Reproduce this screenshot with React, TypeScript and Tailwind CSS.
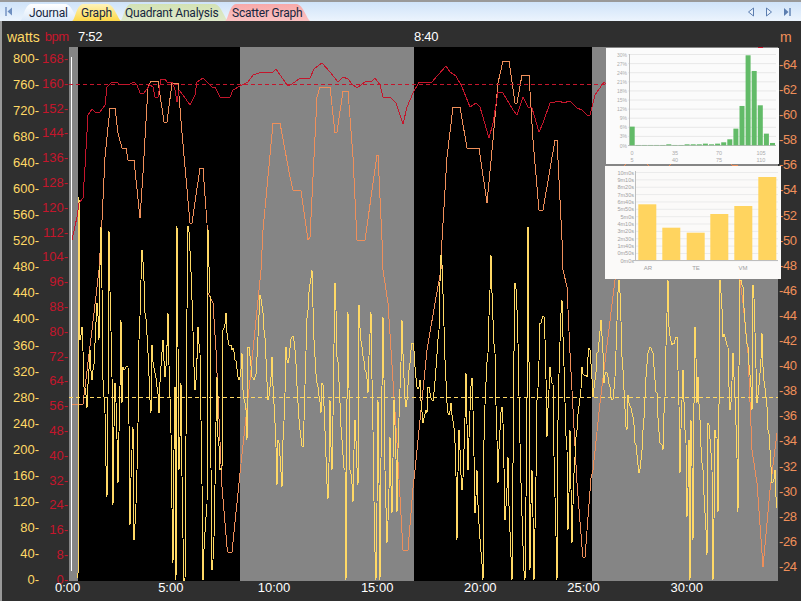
const watts = [800, 760, 720, 680, 640, 600, 560, 520, 480, 440, 400, 360, 320, 280, 240, 200, 160, 120, 80, 40, 0];
const bpm = [168, 160, 152, 144, 136, 128, 120, 112, 104, 96, 88, 80, 72, 64, 56, 48, 40, 32, 24, 16, 8, 0];
const metres = [64, 62, 60, 58, 56, 54, 52, 50, 48, 46, 44, 42, 40, 38, 36, 34, 32, 30, 28, 26, 24];
const times = ["0:00", "5:00", "10:00", "15:00", "20:00", "25:00", "30:00"];

const tabs = [
  { label: "Journal", w: 59, box: "w-[59px] ml-[20px] pl-[9px]", top: "#ffffff", bottom: "#dbe9fa", id: "tabJournal" },
  { label: "Graph", w: 49, box: "w-[49px] -ml-[7px] pl-[9px]", top: "#fff3b8", bottom: "#fdd84a", id: "tabGraph" },
  { label: "Quadrant Analysis", w: 108, box: "w-[108px] -ml-[1px] pl-[5px]", top: "#d3e2b4", bottom: "#dfeacb", id: "tabQuadrant" },
  { label: "Scatter Graph", w: 85, box: "w-[85px] -ml-[3px] pl-[7px]", top: "#f8a9a9", bottom: "#fbc2c2", id: "tabScatter" },
];

const redLine = [
  [72, 240], [77, 217], [79, 203], [83, 198], [85, 167], [88, 115], [92, 109], [95, 112], [100, 112], [105, 105], [107, 87], [112, 82], [117, 82], [119, 84], [130, 84], [134, 82], [137, 85], [140, 93], [144, 93], [150, 85], [153, 87], [155, 97], [158, 97], [161, 79], [165, 79], [167, 82], [172, 82], [175, 90], [177, 102], [179, 90], [183, 95], [190, 105], [195, 95], [197, 82], [203, 78], [207, 82], [212, 87], [215, 87], [220, 97], [230, 97], [233, 90], [242, 85], [248, 82], [253, 75], [262, 72], [273, 72], [276, 69], [287, 85], [290, 85], [295, 82], [300, 78], [310, 78], [314, 69], [322, 63], [330, 72], [338, 82], [343, 77], [348, 79], [352, 84], [357, 88], [365, 82], [372, 81], [375, 78], [380, 85], [383, 97], [390, 97], [396, 103], [403, 124], [407, 107], [413, 93], [419, 82], [432, 82], [438, 75], [446, 66], [450, 72], [456, 76], [462, 87], [470, 107], [476, 103], [480, 107], [489, 138], [493, 123], [498, 92], [503, 93], [513, 110], [517, 115], [523, 97], [528, 107], [532, 108], [539, 132], [543, 123], [550, 103], [560, 101], [563, 103], [570, 101], [577, 108], [582, 110], [587, 115], [590, 115], [595, 95], [604, 82], [607, 85], [640, 70], [700, 62], [762, 47], [778, 60],
];

const orangeLine = [
  [72, 404], [83, 404], [85, 387], [92, 330], [99, 270], [102, 220], [105, 157], [110, 108], [115, 108], [118, 133], [122, 148], [126, 148], [128, 160], [134, 160], [140, 218], [143, 173], [148, 87], [151, 81], [158, 81], [164, 122], [167, 122], [172, 83], [178, 83], [182, 133], [190, 223], [192, 223], [200, 168], [203, 168], [207, 223], [208, 293], [213, 303], [216, 350], [222, 487], [227, 547], [228, 552], [232, 552], [240, 473], [250, 380], [261, 270], [263, 230], [273, 123], [280, 123], [290, 177], [293, 190], [301, 191], [308, 240], [310, 237], [317, 97], [320, 87], [330, 87], [335, 133], [337, 132], [343, 91], [348, 91], [353, 157], [357, 240], [365, 240], [377, 155], [378, 155], [382, 240], [383, 270], [388, 303], [397, 443], [400, 497], [403, 550], [408, 550], [413, 488], [415, 470], [427, 350], [435, 303], [441, 270], [442, 240], [447, 157], [453, 107], [460, 107], [467, 148], [479, 148], [487, 203], [493, 140], [498, 83], [503, 61], [509, 61], [515, 103], [517, 103], [522, 75], [529, 75], [533, 140], [539, 210], [543, 210], [555, 140], [557, 140], [562, 240], [563, 270], [567, 287], [570, 353], [577, 483], [582, 547], [583, 557], [585, 557], [591, 478], [593, 470], [600, 403], [608, 337], [615, 280], [625, 165], [632, 70], [640, 70], [648, 165], [656, 230], [662, 230], [670, 165], [678, 60], [690, 60], [700, 100], [710, 60], [725, 60], [732, 165], [737, 165], [740, 280], [743, 303], [748, 353], [752, 450], [757, 483], [763, 567], [770, 490], [777, 433],
];

const yellowAnchors = [
  [78, 578], [79, 197], [80, 340], [82, 327], [84, 387], [87, 408], [90, 350], [92, 380], [93, 370], [97, 303], [99, 340], [101, 227], [103, 380], [105, 413], [107, 497], [109, 231], [112, 377], [113, 505], [115, 383], [118, 483], [121, 320], [122, 403], [123, 367], [128, 367], [130, 525], [133, 427], [134, 540], [137, 470], [139, 340], [142, 250], [145, 313], [148, 353], [151, 413], [152, 345], [157, 387], [159, 413], [163, 340], [165, 377], [168, 313], [171, 433], [172, 508], [173, 563], [175, 387], [176, 580], [177, 226], [179, 470], [181, 383], [184, 580], [185, 580], [187, 310], [188, 226], [192, 300], [195, 390], [198, 327], [200, 353], [203, 580], [207, 507], [208, 229], [210, 293], [212, 570], [214, 537], [217, 377], [218, 437], [220, 470], [222, 470], [223, 330], [226, 313], [228, 340], [232, 350], [235, 360], [239, 380], [242, 353], [243, 390], [246, 410], [247, 440], [248, 347], [252, 377], [255, 377], [260, 295], [264, 330], [268, 400], [272, 357], [275, 423], [277, 485], [278, 440], [282, 487], [283, 440], [286, 347], [288, 363], [292, 337], [295, 350], [298, 403], [303, 447], [308, 310], [312, 270], [315, 357], [318, 387], [321, 413], [322, 383], [328, 499], [330, 400], [332, 470], [335, 283], [337, 357], [341, 427], [345, 470], [346, 580], [347, 400], [348, 312], [350, 470], [353, 502], [355, 420], [358, 485], [359, 305], [362, 347], [365, 370], [368, 393], [371, 312], [373, 430], [376, 580], [378, 400], [380, 580], [382, 387], [383, 317], [385, 470], [387, 543], [390, 437], [392, 513], [394, 400], [397, 512], [402, 320], [406, 407], [410, 363], [413, 343], [415, 367], [417, 387], [420, 380], [423, 423], [427, 413], [428, 387], [432, 400], [439, 330], [441, 255], [445, 360], [448, 413], [451, 403], [455, 443], [457, 540], [459, 430], [462, 490], [466, 373], [468, 470], [472, 378], [473, 410], [475, 513], [477, 470], [483, 580], [484, 440], [488, 353], [491, 255], [495, 353], [498, 483], [500, 430], [502, 407], [503, 423], [505, 520], [508, 457], [512, 580], [515, 283], [517, 310], [520, 443], [525, 580], [527, 400], [528, 227], [530, 570], [532, 470], [534, 580], [537, 400], [540, 323], [544, 317], [547, 437], [550, 367], [553, 383], [557, 580], [558, 420], [562, 300], [563, 337], [567, 450], [568, 530], [570, 430], [572, 543], [575, 457], [577, 430], [582, 367], [587, 377], [589, 348], [593, 397], [597, 353], [601, 320], [604, 383], [607, 373], [610, 387], [612, 400], [615, 377], [619, 280], [622, 357], [627, 430], [628, 395], [632, 413], [635, 443], [639, 473], [643, 430], [646, 377], [649, 350], [653, 353], [657, 393], [660, 443], [663, 450], [665, 397], [668, 280], [669, 327], [673, 343], [677, 337], [678, 370], [680, 473], [682, 400], [683, 370], [686, 443], [687, 517], [689, 440], [690, 580], [691, 420], [693, 540], [695, 327], [697, 403], [698, 377], [700, 420], [703, 470], [705, 513], [707, 555], [708, 423], [712, 470], [713, 580], [715, 430], [717, 437], [718, 512], [720, 280], [723, 337], [728, 347], [730, 410], [733, 353], [735, 397], [738, 512], [740, 280], [743, 287], [748, 347], [752, 410], [753, 285], [757, 403], [762, 333], [763, 367], [768, 430], [772, 483], [775, 470], [777, 508],
];

// fill the gaps between the traced peaks with one-pixel wiggle
function wiggle(line: number[][]) {
  const out: number[][] = [];
  line.forEach(([x, y], i) => {
    out.push([x, y]);
    const next = line[i + 1];
    if (!next) return;
    for (let px = x + 1; px < next[0]; px++) {
      const t = (px - x) / (next[0] - x);
      const amp = 4 + Math.abs(next[1] - y) * 0.12;
      out.push([px, Math.round(y + (next[1] - y) * t + Math.sin(px * 12.9898) * amp)]);
    }
  });
  return out;
}

const yellowLine = wiggle(yellowAnchors);

const toPoints = (line: number[][]) => line.map(([x, y]) => `${x},${y}`).join(" ");

const histoHeights = [56, 1, 1, 1, 1, 1, 3, 1, 1, 3, 3, 3, 5, 3, 5, 9, 18, 50, 118, 270, 223, 120, 35, 7];
const histoY = ["30%", "27%", "24%", "21%", "18%", "15%", "12%", "9%", "6%", "3%", "0%"];
const lapY = ["10m0s", "9m10s", "8m20s", "7m30s", "6m40s", "5m50s", "5m0s", "4m10s", "3m20s", "2m30s", "1m40s", "0m50s", "0m0s"];
const lapBars = [
  [638.3, 204.3], [662.3, 227.7], [686.7, 232.7], [710.3, 214], [734.3, 206], [758.3, 177],
];

function Tab({ tab }: { tab: (typeof tabs)[number] }) {
  const w = tab.w;
  return (
    <div className={`relative h-[17px] shrink-0 ${tab.box}`}>
      <svg className="absolute inset-0" width={w} height={17}>
        <defs>
          <linearGradient id={tab.id} x1="0" y1="0" x2="0" y2="1">
            <stop offset="0" stopColor={tab.top} />
            <stop offset="1" stopColor={tab.bottom} />
          </linearGradient>
        </defs>
        <path
          d={`M0 17 C3 17 4 1 11 0 L${w - 13} 0 C${w - 7} 1 ${w - 3} 15 ${w} 17 Z`}
          fill={`url(#${tab.id})`}
        />
      </svg>
      <span className="relative block whitespace-nowrap pt-[2px] text-[12px] leading-[14px] tracking-[-0.2px] text-[#16263f]">
        {tab.label}
      </span>
    </div>
  );
}

function TabBar() {
  return (
    <div className="relative flex h-[21px] items-end border-t-2 border-[#999999] bg-gradient-to-b from-[#cfe3f9] to-[#ecf4fd] font-['Roboto',sans-serif]">
      <svg className="absolute left-[5px] top-[5px]" width="8" height="9" viewBox="0 0 8 9">
        <path d="M1 0v9" stroke="#6f8fc0" strokeWidth="1.4" />
        <path d="M7 .5v8L2.5 4.5z" fill="#6f8fc0" />
      </svg>
      {tabs.map((tab) => (
        <Tab key={tab.label} tab={tab} />
      ))}
      <div className="ml-auto flex items-center gap-[10px] pb-[4px] pr-[10px]">
        <svg width="8" height="10" viewBox="0 0 8 10">
          <path d="M6.5 1v8L1.5 5z" fill="#e8f1fb" stroke="#5c7eb0" />
        </svg>
        <svg width="8" height="10" viewBox="0 0 8 10">
          <path d="M1.5 1v8l5-4z" fill="#e8f1fb" stroke="#5c7eb0" />
        </svg>
        <svg width="8" height="10" viewBox="0 0 8 10">
          <path d="M1 1v8l4.5-4z" fill="#5c7eb0" />
          <path d="M7 1v8" stroke="#5c7eb0" strokeWidth="1.4" />
        </svg>
      </div>
    </div>
  );
}

function HistogramInset() {
  return (
    <div className="absolute left-[537px] top-[1px] h-[116px] w-[173px] bg-[#fbfbfb]">
      <svg width="173" height="116" viewBox="606 48 173 116" className="font-['Liberation_Sans',sans-serif]">
        {histoY.map((label, i) => (
          <g key={label}>
            <line x1="628" x2="776" y1={54.5 + i * 9.1} y2={54.5 + i * 9.1} stroke="#e8e8e8" />
            <text x="627" y={56.5 + i * 9.1} fontSize="5" fill="#ababab" textAnchor="end">
              {label}
            </text>
          </g>
        ))}
        <line x1="629.5" x2="629.5" y1="54" y2="146" stroke="#bdbdbd" />
        <line x1="628" x2="776" y1="145.5" y2="145.5" stroke="#bdbdbd" />
        {histoHeights.map((h, i) => (
          <rect key={i} x={629.7 + i * 6.1} y={145.3 - h / 3} width="5" height={h / 3} fill="#62bb68" />
        ))}
        {[
          [632, "0", "5"],
          [675, "35", "40"],
          [719, "70", "75"],
          [761, "105", "110"],
        ].map(([x, a, b]) => (
          <g key={a} fontSize="5.5" fill="#ababab" textAnchor="middle">
            <text x={x} y="155">{a}</text>
            <text x={x} y="162">{b}</text>
          </g>
        ))}
      </svg>
    </div>
  );
}

function LapInset() {
  return (
    <div className="absolute left-[536px] top-[119px] h-[113px] w-[176px] bg-[#fbfaf9]">
      <svg width="176" height="113" viewBox="605 166 176 113" className="font-['Liberation_Sans',sans-serif]">
        {lapY.map((label, i) => (
          <g key={label}>
            <line x1="635" x2="778" y1={172.5 + i * 7.36} y2={172.5 + i * 7.36} stroke="#ebebeb" />
            <text x="634" y={174.5 + i * 7.36} fontSize="5.5" fill="#a0a0a0" textAnchor="end">
              {label}
            </text>
          </g>
        ))}
        <line x1="635.5" x2="635.5" y1="171" y2="261" stroke="#bdbdbd" />
        <line x1="633" x2="778" y1="260.5" y2="260.5" stroke="#bdbdbd" />
        {lapBars.map(([x, y]) => (
          <rect key={x} x={x} y={y} width="18" height={260 - y} fill="#ffd45f" />
        ))}
        {[
          [648, "AR"],
          [696, "TE"],
          [743, "VM"],
        ].map(([x, label]) => (
          <text key={label} x={x} y="270" fontSize="6" fill="#a0a0a0" textAnchor="middle">
            {label}
          </text>
        ))}
      </svg>
    </div>
  );
}

function Chart() {
  return (
    <div className="relative flex h-[534px] bg-[#858585]">
      {/* laps */}
      <div className="ml-[9px] h-full w-[162px] bg-black" />
      <div className="ml-[174px] h-full w-[178px] bg-black" />
      <svg className="absolute inset-0 overflow-hidden" width="709" height="534" viewBox="69 47 709 534">
        <line x1="71.5" x2="71.5" y1="57" y2="571" stroke="#ffffff" />
        <polyline points={toPoints(orangeLine)} fill="none" stroke="#ef8f5a" strokeWidth="1" shapeRendering="crispEdges" />
        <polyline points={toPoints(yellowLine)} fill="none" stroke="#ffd966" strokeWidth="1" shapeRendering="crispEdges" />
        <polyline points={toPoints(redLine)} fill="none" stroke="#c4162c" strokeWidth="1" shapeRendering="crispEdges" />
        <line x1="69" x2="778" y1="84.5" y2="84.5" stroke="#c4162c" strokeDasharray="4 3" />
        <line x1="69" x2="778" y1="397.5" y2="397.5" stroke="#ffd966" strokeDasharray="4 3" />
      </svg>
      <HistogramInset />
      <LapInset />
    </div>
  );
}

export default function App() {
  return (
    <div className="relative h-[601px] w-[801px] overflow-hidden bg-[#2f2f2f] font-['Liberation_Sans',sans-serif]">
      <TabBar />

      <div className="flex h-[26px] items-center border-l-2 border-[#9a9a9a] pt-[5px] text-[13px] leading-4">
        <div className="flex w-[67px] pl-[5px]">
          <span className="text-[14px] text-[#ffd966]">watts</span>
          <span className="ml-[5px] tracking-[-0.4px] text-[#c4162c]">bpm</span>
        </div>
        <div className="flex w-[709px] tracking-[-0.3px] text-white">
          <span className="ml-[9px]">7:52</span>
          <span className="ml-[312px]">8:40</span>
        </div>
        <span className="pl-[2px] text-[14px] text-[#ef8f5a]">m</span>
      </div>

      <div className="flex h-[554px] border-l-2 border-[#9a9a9a] text-[13px] leading-[8px]">
        <div className="flex w-[37px] flex-col items-end justify-between pb-[17px] pt-[8px] text-[#ffd966]">
          {watts.map((v) => (
            <span key={v}>{v}-</span>
          ))}
        </div>
        <div className="flex w-[30px] flex-col items-end justify-between pb-[17px] pr-[1px] pt-[8px] text-[#c4162c]">
          {bpm.map((v) => (
            <span key={v}>{v}-</span>
          ))}
        </div>

        <div className="w-[709px]">
          <Chart />
          <div className="-ml-[53px] flex h-[20px] pt-[3px] text-white">
            {times.map((t) => (
              <span key={t} className="w-[103.2px] shrink-0 text-center">
                {t}
              </span>
            ))}
          </div>
        </div>

        <div className="flex w-[23px] flex-col justify-between pb-[30px] pl-[1px] pt-[14px] tracking-[-0.4px] text-[#ef8f5a]">
          {metres.map((v) => (
            <span key={v}>-{v}</span>
          ))}
        </div>
      </div>
    </div>
  );
}
